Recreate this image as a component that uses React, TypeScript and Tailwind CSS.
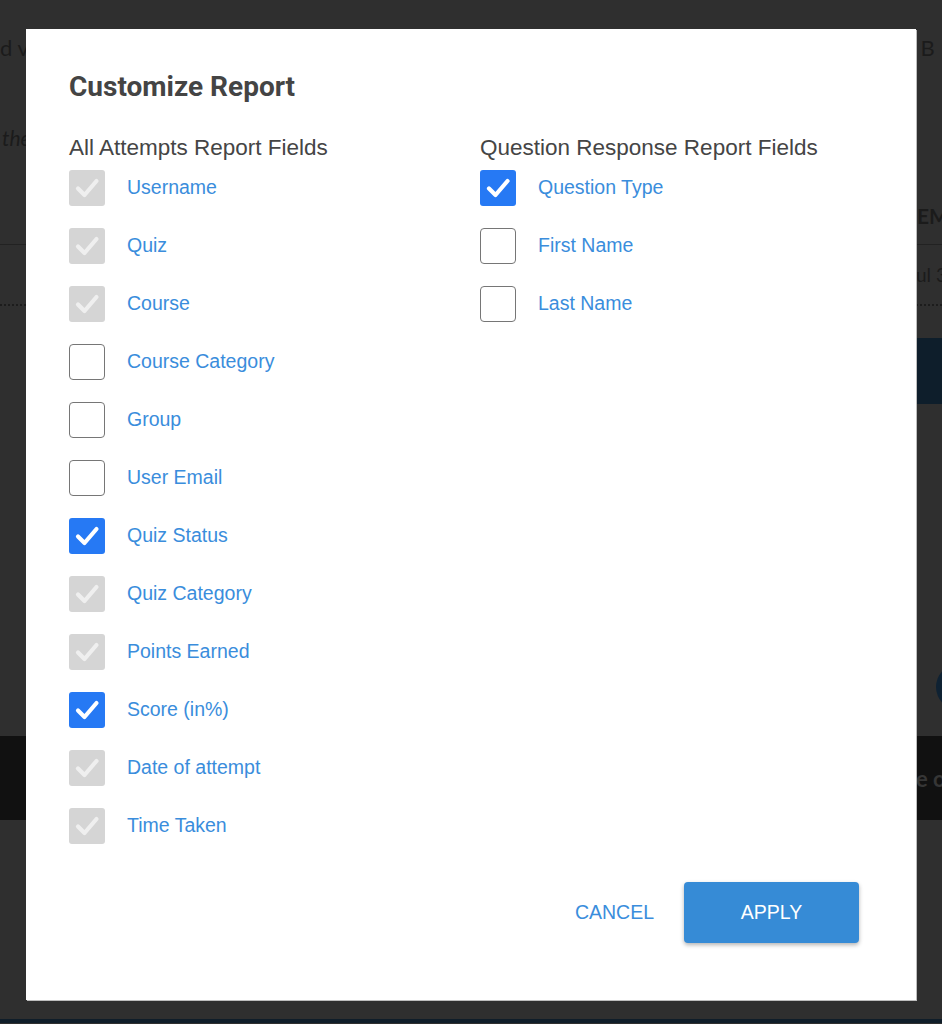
import React from "react";

type FieldState = "locked" | "on" | "off";

type Field = { label: string; state: FieldState };

const attemptFields: Field[] = [
  { label: "Username", state: "locked" },
  { label: "Quiz", state: "locked" },
  { label: "Course", state: "locked" },
  { label: "Course Category", state: "off" },
  { label: "Group", state: "off" },
  { label: "User Email", state: "off" },
  { label: "Quiz Status", state: "on" },
  { label: "Quiz Category", state: "locked" },
  { label: "Points Earned", state: "locked" },
  { label: "Score (in%)", state: "on" },
  { label: "Date of attempt", state: "locked" },
  { label: "Time Taken", state: "locked" },
];

const responseFields: Field[] = [
  { label: "Question Type", state: "on" },
  { label: "First Name", state: "off" },
  { label: "Last Name", state: "off" },
];

function Check({ color }: { color: string }) {
  return (
    <svg viewBox="0 0 36 36" className="h-9 w-9">
      <path
        d="M9 18.5 L15.5 25 L27.5 11"
        fill="none"
        stroke={color}
        strokeWidth="4.2"
        strokeLinecap="round"
        strokeLinejoin="round"
      />
    </svg>
  );
}

function Box({ state }: { state: FieldState }) {
  if (state === "on") {
    return (
      <span className="flex h-9 w-9 shrink-0 items-center justify-center rounded-[3px] bg-[#2679f4]">
        <Check color="#ffffff" />
      </span>
    );
  }
  if (state === "locked") {
    return (
      <span className="flex h-9 w-9 shrink-0 items-center justify-center rounded-[3px] bg-[#d5d5d5]">
        <Check color="#efefef" />
      </span>
    );
  }
  return (
    <span className="h-9 w-9 shrink-0 rounded-[4px] border-[1.5px] border-[#767676] bg-white" />
  );
}

function FieldList({ title, fields }: { title: string; fields: Field[] }) {
  return (
    <div className="flex flex-col">
      <h3 className="h-7 whitespace-nowrap text-[22.5px] leading-7 text-[#454545]">{title}</h3>
      <ul className="mt-2 flex flex-col gap-[22px]">
        {fields.map((f) => (
          <li key={f.label} className="flex h-9 items-center gap-[22px]">
            <Box state={f.state} />
            <span className="text-[19.5px] text-[#3a8ddc]">{f.label}</span>
          </li>
        ))}
      </ul>
    </div>
  );
}

function BackgroundPage() {
  return (
    <div className="flex h-[1024px] w-full flex-col overflow-hidden bg-[#2f2f2f] font-['Lato',sans-serif] text-[#1b1b1b]">
      <div className="mt-[34px] flex h-[26px] items-center justify-between whitespace-nowrap text-[22px]">
        <span>d view your quiz results</span>
        <span className="w-[37px] overflow-hidden pl-[2px]">t B</span>
      </div>
      <div className="mt-[62px] h-[26px] whitespace-nowrap pl-[2px] text-[21px] italic">
        the
      </div>
      <div className="mt-[52px] flex h-[26px] justify-end">
        <span className="w-[25px] overflow-hidden whitespace-nowrap text-[21px] font-bold">
          EM
        </span>
      </div>
      <div className="mt-[18px] border-b border-[#222222]" />
      <div className="mt-[16px] flex h-[26px] justify-end">
        <span className="w-[26px] overflow-hidden whitespace-nowrap text-[19px]">
          ul 3
        </span>
      </div>
      <div className="mt-[17px] border-b-2 border-dotted border-[#1c1c1c]" />
      <div className="mt-[32px] flex justify-end">
        <div className="h-[66px] w-[26px] bg-[#0e1e2b]" />
      </div>
      <div className="mt-[260px] flex justify-end">
        <div className="mr-[-40px] h-[46px] w-[46px] rounded-full bg-[#0f2233]" />
      </div>
      <div className="mt-[26px] flex h-[84px] items-center justify-end bg-[#111111]">
        <span className="w-[26px] overflow-hidden whitespace-nowrap text-[22px] font-bold text-[#363636]">
          e of
        </span>
      </div>
      <div className="mt-[199px] h-[4px] bg-[#0f1d29]" />
    </div>
  );
}

export default function App() {
  return (
    <div className="relative h-[1024px] w-full overflow-hidden">
      <BackgroundPage />
      <div className="absolute inset-0 pl-[26px] pt-[29px]">
        <div className="flex h-[971px] w-[890px] flex-col bg-white pb-[57px] pl-[43px] pr-[57px] pt-[42px] font-['Liberation_Sans',Arial,sans-serif] shadow-[1px_1px_0_#bdbdbd]">
          <h2 className="h-8 font-['Roboto',sans-serif] text-[28px] font-bold leading-8 text-[#444444]">
            Customize Report
          </h2>
          <div className="mt-[31px] grid grid-cols-[411px_1fr]">
            <FieldList title="All Attempts Report Fields" fields={attemptFields} />
            <FieldList title="Question Response Report Fields" fields={responseFields} />
          </div>
          <div className="mt-auto flex items-center justify-end gap-[30px]">
            <button
              type="button"
              className="text-[19.5px] uppercase text-[#3a8ddc]"
            >
              Cancel
            </button>
            <button
              type="button"
              className="h-[61px] w-[175px] rounded-[4px] bg-[#368bd6] text-[19.5px] uppercase text-white shadow-[0_2px_4px_rgba(0,0,0,0.3)]"
            >
              Apply
            </button>
          </div>
        </div>
      </div>
    </div>
  );
}
